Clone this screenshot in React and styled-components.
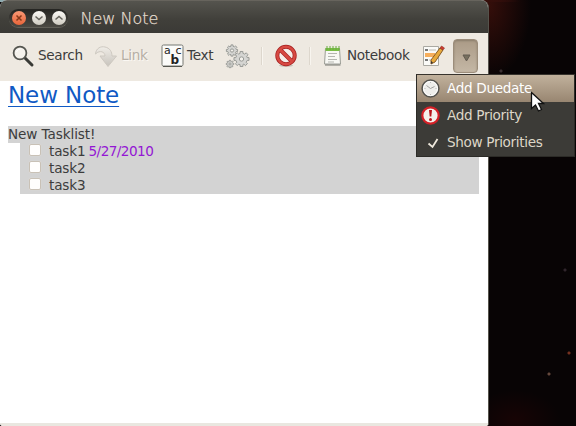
import React from 'react';
import styled, { createGlobalStyle, css } from 'styled-components';

const GlobalStyle = createGlobalStyle`
  * { box-sizing: border-box; }
  body { margin: 0; overflow: hidden; background: #080405; }
  svg { display: block; flex: none; }
`;

const Desktop = styled.div`
  position: relative;
  width: 576px;
  height: 426px;
  overflow: hidden;
  font: 13.6px/17px "DejaVu Sans", sans-serif;
  letter-spacing: -0.34px;
  color: #3c3c3c;
  background:
    radial-gradient(circle at 569px 353px, #74301f 0 1px, transparent 2px),
    radial-gradient(circle at 549px 374px, #65483c 0 1px, transparent 2px),
    radial-gradient(circle at 501px 71px, #3b3032 0 1px, transparent 2px),
    radial-gradient(circle at 565px 270px, #30252c 0 1px, transparent 2px),
    radial-gradient(ellipse 42px 75px at 489px 5px, #350e0a, transparent),
    radial-gradient(ellipse 45px 30px at 515px 420px, #170405, transparent),
    linear-gradient(90deg, #8eabb0 0, #777a7c 100px, #8a3a28 140px, #511813 200px, #4b1513 480px, transparent 520px) 0 0 / 576px 2px no-repeat,
    #080405;
`;

const Window = styled.section`
  width: 489px;
  height: 426px;
  display: flex;
  flex-direction: column;
  border-right: 1px solid #55534c;
  border-radius: 7px 8px 3px 3px;
  overflow: hidden;
  background: #fff;
`;

const TitleBar = styled.header`
  height: 33px;
  flex: none;
  display: flex;
  align-items: center;
  padding: 2px 0 0 9px;
  border-top: 1px solid #67645d;
  background: linear-gradient(#55544e, #403f3a 60%, #3b3a36);
`;

const WindowButtons = styled.div`
  width: 59px;
  height: 18px;
  display: flex;
  align-items: center;
  gap: 6px;
  padding-left: 3px;
  border-radius: 9px;
  background: linear-gradient(#252522, #4b4943);
  box-shadow: 0 1px #615f57;
`;

const WindowButton = styled.span`
  width: 14px;
  height: 14px;
  border-radius: 50%;
  display: grid;
  place-items: center;
  background: ${({ $close }) => ($close ? 'linear-gradient(#f99875, #e9653a)' : 'linear-gradient(#fbfaf6, #cfcbc1)')};
`;

const Title = styled.h1`
  margin: 2px 0 0 12.5px;
  font: 200 16px/20px "DejaVu Sans", sans-serif;
  letter-spacing: 0;
  color: #e4ddcf;
  -webkit-text-stroke: 0.25px #e4ddcf;
  white-space: nowrap;
`;

const Toolbar = styled.nav`
  height: 48px;
  flex: none;
  display: flex;
  align-items: center;
  padding: 0 0 2px 12px;
  background: #eee9e1;
`;

const Tool = styled.div`
  display: flex;
  align-items: center;
  width: ${({ $width }) => $width}px;
  gap: ${({ $gap = 3 }) => $gap}px;
  flex: none;
  white-space: nowrap;
  color: ${({ $disabled }) => ($disabled ? '#b6afa5' : '#3c3c3c')};
  text-shadow: ${({ $disabled }) => ($disabled ? '1px 1px #fbf8f3' : 'none')};
`;

const ToolLabel = styled.span`
  height: 17px;
  margin-top: -2px;
`;

const Separator = styled.i`
  width: 1px;
  height: 18px;
  margin-right: ${({ $after }) => $after}px;
  background: #ddd7cd;
  box-shadow: 1px 0 #f8f5ef;
`;

const DropButton = styled.button`
  width: 25px;
  height: 34px;
  padding: 3px 0 0 1px;
  border: 1px solid #9c8d7b;
  border-radius: 4px;
  display: grid;
  place-items: center;
  background: linear-gradient(#ab9b87, #c4b7a5);
  box-shadow: inset 0 1px 2px #8b7d6c;
`;

const Note = styled.main`
  flex: 1;
  padding: 0 9px 0 8px;
`;

const NoteTitle = styled.h2`
  width: 111px;
  height: 45px;
  margin: 0;
  font-size: 23px;
  letter-spacing: -0.1px;
  font-weight: 400;
  line-height: 28px;
  color: #1059c4;
  text-decoration: underline;
  text-decoration-thickness: 1px;
  text-underline-offset: 3px;
  white-space: nowrap;
`;

const ListTitle = styled.div`
  height: 17px;
  background: #d3d3d3;
  letter-spacing: -0.1px;
`;

const TaskList = styled.ul`
  margin: 0 0 0 12px;
  padding: 0;
  list-style: none;
  background: #d3d3d3;
`;

const Task = styled.li`
  height: 17px;
  display: flex;
  align-items: center;
  padding-left: 9px;
  letter-spacing: -0.15px;
`;

const CheckBox = styled.i`
  width: 12px;
  height: 12px;
  margin: 0 8px 3px 0;
  border: 1px solid #c9c1b6;
  border-radius: 2px;
  background: #fffefd;
  box-shadow: 0 0 1px #e9e4dd;
`;

const DueDate = styled.span`
  margin-left: 3px;
  letter-spacing: -0.55px;
  color: #9417d3;
`;

const StatusEdge = styled.footer`
  height: 3px;
  flex: none;
  background: #e9e7e0;
`;

const Menu = styled.div`
  position: absolute;
  left: 416px;
  top: 74px;
  width: 159px;
  height: 83px;
  border: 1px solid #2c2b27;
  border-top-color: #37332d;
  background: #3c3b37;
`;

const MenuItem = styled.div`
  height: 27px;
  display: flex;
  align-items: center;
  gap: 7px;
  padding: 0 0 1px 4px;
  color: #ded7c8;
  white-space: nowrap;
  ${({ $active }) => $active && css`
    color: #fff;
    background: linear-gradient(#c1b19c, #988671);
  `}
`;

const Pointer = styled.svg`
  position: absolute;
  left: 530px;
  top: 91px;
`;

const SearchIcon = () => (
  <svg width="23" height="23" viewBox="0 0 23 23" fill="none">
    <path d="M13 13 20 20" stroke="#393a36" strokeWidth="3" strokeLinecap="round" />
    <circle cx="8" cy="8" r="6.4" fill="#f5f2ec" stroke="#555650" strokeWidth="1.8" />
    <path d="M4.500 7a4 4 0 0 1 4-3" stroke="#fff" />
  </svg>
);

const LinkIcon = () => (
  <svg width="24" height="23" viewBox="0 0 24 23">
    <defs><linearGradient id="link" x2="0" y2="1"><stop stopColor="#f0ede7" /><stop offset="1" stopColor="#c7c3bc" /></linearGradient></defs>
    <path d="M1.500 9C2 3 7 1 11 2c5 1 7 5 7 9h4.500L14 21.500 6 11h5C11 7 6 4.500 1.500 9Z" fill="url(#link)" stroke="#cdc8c0" />
  </svg>
);

const AbcText = styled.text`
  font: ${({ $bold }) => ($bold ? '700 12px' : '400 11px')} "DejaVu Sans", sans-serif;
  letter-spacing: 0;
  fill: #222;
`;

const TextIcon = () => (
  <svg width="23" height="24" viewBox="0 0 23 24">
    <rect x="1" y="1" width="21" height="21" rx="1.5" fill="#fbfbf9" stroke="#777873" />
    <path d="M2 22.500h19" stroke="#555650" />
    <AbcText x="3" y="10">a</AbcText>
    <AbcText x="14.500" y="9.500" fontStyle="italic">c</AbcText>
    <AbcText x="9.500" y="19.500" $bold>b</AbcText>
  </svg>
);

const GearShape = ({ x, y, scale }) => (
  <g transform={`translate(${x} ${y}) scale(${scale})`} fill="#d5d5d2" stroke="#999b97" strokeWidth={1 / scale}>
    <path d="M-1.500-8h3v2l2 .8L5-6.600 7-4.500 5.500-3l.5 1.500h2v3H6L5 3.500 6.300 5 4.200 7 2.500 5.500l-1 .5v2h-3V6l-1.500-.5L-4.500 7l-2-2L-5 3.500l-1-2h-2v-3h2l.7-1.700L-6.500-4.600l2-2L-3-5.200-1.500-6Z" />
    <circle r="2.300" fill="#f2f0eb" />
  </g>
);

const GearsIcon = () => (
  <svg width="25" height="25" viewBox="0 0 25 25">
    <GearShape x={7} y={6.5} scale={0.7} />
    <GearShape x={16.5} y={15} scale={0.94} />
    <GearShape x={5} y={20} scale={0.46} />
  </svg>
);

const StopIcon = () => (
  <svg width="24" height="24" viewBox="0 0 24 24" fill="none">
    <ellipse cx="12" cy="21.500" rx="7" ry="1.500" fill="#c9c2b9" />
    <circle cx="12" cy="11.500" r="8.700" fill="#f5eee9" stroke="#a72222" strokeWidth="4" />
    <path d="m5.500 5 13 13" stroke="#a72222" strokeWidth="4" />
    <circle cx="12" cy="11.500" r="8.700" stroke="#d74942" strokeWidth="2.500" />
    <path d="m5.500 5 13 13" stroke="#d74942" strokeWidth="2.800" />
  </svg>
);

const NotebookIcon = () => (
  <svg width="18" height="22" viewBox="0 0 18 22">
    <path d="M1.500 3.500h14l1 15.500h-16z" fill="#f8f8f4" stroke="#9b9d96" />
    <path d="M1 20h15.500" stroke="#777973" />
    <path d="M1.500 3h14v3h-14z" fill="#79bd43" />
    <path d="M3 1v4m3-4v4m3-4v4m3-4v4m3-4v4" stroke="#68ac40" />
    <path d="M4 8.500h9m-9 3h7m-7 3h9m-9 2.500h6" stroke="#b5b6b0" />
  </svg>
);

const EditIcon = () => (
  <svg width="23" height="23" viewBox="0 0 23 23">
    <path d="M1.500 1.500h15v19h-15z" fill="#fafaf7" stroke="#aaa9a2" />
    <path d="M3 5h3m-3 5h3m-3 5h3" stroke="#777" strokeWidth="2" />
    <path d="M7 5h7M7 15h4" stroke="#bdbbb4" />
    <path d="M3 8h10v4H3z" fill="#f6ae5c" />
    <path d="m9 15 9-12 3 2-8 12-4 2Z" fill="#e7a93c" stroke="#875b25" />
    <path d="m18 3 1.500-2 3 2L21 5Z" fill="#cf3b2d" stroke="#8f332b" strokeWidth=".6" />
    <path d="m9 16 2 1.500L9 19Z" fill="#333" />
  </svg>
);

const ClockIcon = () => (
  <svg width="19" height="19" viewBox="0 0 19 19" fill="none">
    <circle cx="9.500" cy="9.500" r="8.400" fill="#eeeeeb" stroke="#55544f" strokeWidth="1.500" />
    <circle cx="9.500" cy="9.500" r="7" stroke="#fff" />
    <path d="m5.500 6.500 4 3 4-2" stroke="#999" strokeWidth=".9" />
    <path d="M9.500 3v1m0 11v1m-6-6.500h1m10 0h1" stroke="#bbb" />
  </svg>
);

const PriorityIcon = () => (
  <svg width="19" height="19" viewBox="0 0 19 19">
    <circle cx="9.500" cy="9.500" r="8.200" fill="#f4f0eb" stroke="#d42027" strokeWidth="2.200" />
    <path d="M8 4h3l-.7 6.500H8.700Z" fill="#b8151c" />
    <circle cx="9.500" cy="13.500" r="1.500" fill="#b8151c" />
  </svg>
);

const CheckIcon = () => (
  <svg width="19" height="18" viewBox="0 0 19 18" fill="none">
    <path d="m7.500 10.500 4 3.500 5-8" stroke="#eee8dc" strokeWidth="1.800" />
  </svg>
);

const ButtonGlyph = ({ path, color = '#65645d' }) => (
  <svg width="10" height="10" viewBox="0 0 10 10" fill="none">
    <path d={path} stroke={color} strokeWidth="1.500" />
  </svg>
);

const tasks = [{ name: 'task1', due: '5/27/2010' }, { name: 'task2' }, { name: 'task3' }];

export default function App() {
  return (
    <Desktop>
      <GlobalStyle />
      <Window>
        <TitleBar>
          <WindowButtons>
            <WindowButton $close><ButtonGlyph path="m2.500 2.500 5 5m0-5-5 5" color="#853819" /></WindowButton>
            <WindowButton><ButtonGlyph path="m1.500 3.500 3.500 3 3.500-3" /></WindowButton>
            <WindowButton><ButtonGlyph path="m1.500 6.500 3.500-3 3.500 3" /></WindowButton>
          </WindowButtons>
          <Title>New Note</Title>
        </TitleBar>
        <Toolbar>
          <Tool $width={82}><SearchIcon /><ToolLabel>Search</ToolLabel></Tool>
          <Tool $width={67} $disabled><LinkIcon /><ToolLabel>Link</ToolLabel></Tool>
          <Tool $width={64}><TextIcon /><ToolLabel>Text</ToolLabel></Tool>
          <Tool $width={36}><GearsIcon /></Tool>
          <Separator $after={12} />
          <Tool $width={35}><StopIcon /></Tool>
          <Separator $after={14} />
          <Tool $width={98} $gap={5}><NotebookIcon /><ToolLabel>Notebook</ToolLabel></Tool>
          <Tool $width={31}><EditIcon /></Tool>
          <DropButton aria-label="More">
            <svg width="9" height="8" viewBox="0 0 9 8"><path d="M1 1h7L4.500 7Z" fill="#77705f" stroke="#635b50" /></svg>
          </DropButton>
        </Toolbar>
        <Note>
          <NoteTitle>New Note</NoteTitle>
          <ListTitle>New Tasklist!</ListTitle>
          <TaskList>
            {tasks.map(({ name, due }) => (
              <Task key={name}><CheckBox />{name}{due && <DueDate>{due}</DueDate>}</Task>
            ))}
          </TaskList>
        </Note>
        <StatusEdge />
      </Window>
      <Menu>
        <MenuItem $active><ClockIcon />Add Duedate</MenuItem>
        <MenuItem><PriorityIcon />Add Priority</MenuItem>
        <MenuItem><CheckIcon />Show Priorities</MenuItem>
      </Menu>
      <Pointer width="15" height="22" viewBox="0 0 15 22">
        <path d="M1.500 1.500v16l4-3.500 3 6 3-1.500-3-6h5Z" fill="#fff" stroke="#111" strokeWidth="1.300" />
      </Pointer>
    </Desktop>
  );
}
